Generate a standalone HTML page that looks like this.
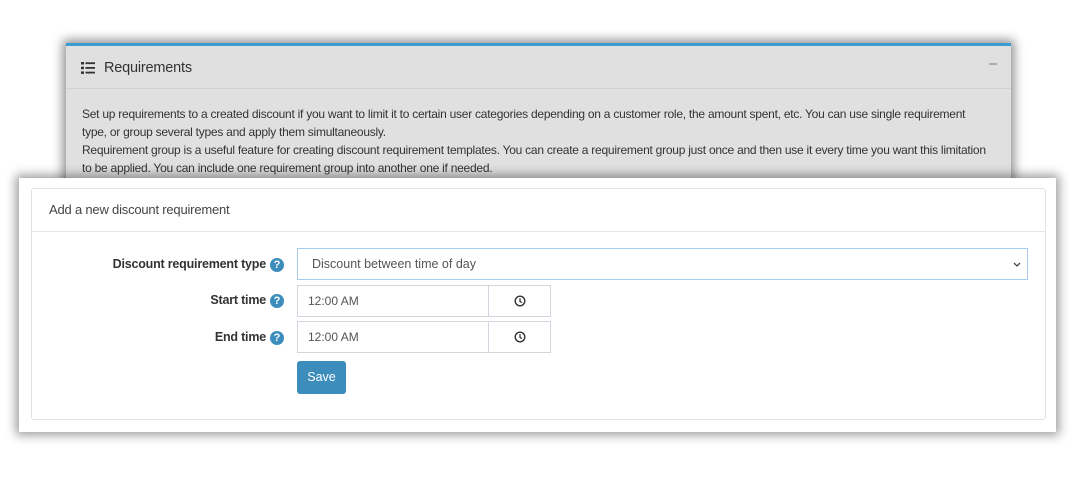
<!DOCTYPE html>
<html><head><style>
body{margin:0;width:1075px;height:480px;background:#fff;position:relative;overflow:hidden;font-family:"Liberation Sans",sans-serif;}
.back{position:absolute;left:66px;top:43px;width:945px;height:150px;background:#e0e0e0;border-top:3px solid #3c9dd0;box-shadow:0 0 10px 3px rgba(0,0,0,.45);}
.back .hd{height:42px;border-bottom:1px solid #d2d2d2;position:relative;}
.back .hd .t{position:absolute;left:38px;top:14px;font-size:14.5px;color:#333;letter-spacing:-0.2px}
.back .hd .min{position:absolute;right:14px;top:17px;width:8px;height:1.5px;background:#aaa;}
.back .body{padding:16px 16px;font-size:12px;line-height:18px;color:#333;letter-spacing:-0.25px;white-space:nowrap}
.front{position:absolute;left:19px;top:178px;width:1037px;height:254px;background:#fff;box-shadow:0 0 10px 3px rgba(0,0,0,.4);}
.card{position:absolute;left:12px;top:10px;width:1013px;height:230px;border:1px solid #e3e3e3;border-radius:3px;}
.card .hd{height:42px;border-bottom:1px solid #e6e6e6;font-size:13px;color:#444;line-height:42px;padding-left:17px;letter-spacing:-0.2px}
.lbl{position:absolute;right:calc(1075px - 266px);font-size:12.5px;font-weight:bold;color:#333;white-space:nowrap;letter-spacing:-0.2px}
.q{position:absolute;left:270px;width:14px;height:14px;border-radius:50%;background:#3c8dbc;color:#fff;font-size:11px;font-weight:bold;text-align:center;line-height:14px;}
.inp{position:absolute;left:297px;border:1px solid #d2d6de;box-sizing:border-box;font-size:12px;color:#555;padding-left:10px;}
.addon{position:absolute;left:488px;width:63px;border:1px solid #d2d6de;box-sizing:border-box;}
</style></head><body>
<div class="back">
 <div class="hd">
  <svg style="position:absolute;left:15px;top:16px" width="14" height="12" viewBox="0 0 14 12"><rect x="0" y="0" width="3" height="2.5" fill="#333"/><rect x="0" y="4.7" width="3" height="2.5" fill="#333"/><rect x="0" y="9.4" width="3" height="2.5" fill="#333"/><rect x="4.5" y="0.3" width="9.5" height="1.8" fill="#333"/><rect x="4.5" y="5" width="9.5" height="1.8" fill="#333"/><rect x="4.5" y="9.7" width="9.5" height="1.8" fill="#333"/></svg>
  <span class="t">Requirements</span><span class="min"></span>
 </div>
 <div class="body">Set up requirements to a created discount if you want to limit it to certain user categories depending on a customer role, the amount spent, etc. You can use single requirement<br>type, or group several types and apply them simultaneously.<br>Requirement group is a useful feature for creating discount requirement templates. You can create a requirement group just once and then use it every time you want this limitation<br>to be applied. You can include one requirement group into another one if needed.</div>
</div>
<div class="front"><div class="card"><div class="hd">Add a new discount requirement</div></div></div>
<div style="position:absolute;left:0;top:0;width:1075px;height:480px;">
 <div class="lbl" style="top:257px">Discount requirement type</div><div class="q" style="top:258px">?</div>
 <div class="lbl" style="top:293px">Start time</div><div class="q" style="top:294px">?</div>
 <div class="lbl" style="top:330px">End time</div><div class="q" style="top:331px">?</div>
 <div class="inp" style="top:248px;width:731px;height:32px;line-height:30px;border-color:#a9cdf0;padding-left:14px;font-size:12.5px">Discount between time of day<svg style="position:absolute;right:6px;top:13px" width="8" height="5" viewBox="0 0 8 5"><path d="M1 1L4 4L7 1" fill="none" stroke="#444" stroke-width="1.3"/></svg></div>
 <div class="inp" style="top:285px;width:192px;height:32px;line-height:30px">12:00 AM</div>
 <div class="addon" style="top:285px;height:32px"><svg style="position:absolute;left:25px;top:9px" width="12" height="12" viewBox="0 0 12 12"><circle cx="6" cy="6" r="4.8" fill="none" stroke="#333" stroke-width="1.4"/><path d="M6 3.3V6.3L7.8 7.6" fill="none" stroke="#333" stroke-width="1.3"/></svg></div>
 <div class="inp" style="top:321px;width:192px;height:32px;line-height:30px">12:00 AM</div>
 <div class="addon" style="top:321px;height:32px"><svg style="position:absolute;left:25px;top:9px" width="12" height="12" viewBox="0 0 12 12"><circle cx="6" cy="6" r="4.8" fill="none" stroke="#333" stroke-width="1.4"/><path d="M6 3.3V6.3L7.8 7.6" fill="none" stroke="#333" stroke-width="1.3"/></svg></div>
 <div style="position:absolute;left:297px;top:361px;width:49px;height:33px;background:#3c8dbc;border-radius:3px;color:#fff;font-size:12.5px;text-align:center;line-height:33px">Save</div>
</div>
</body></html>
